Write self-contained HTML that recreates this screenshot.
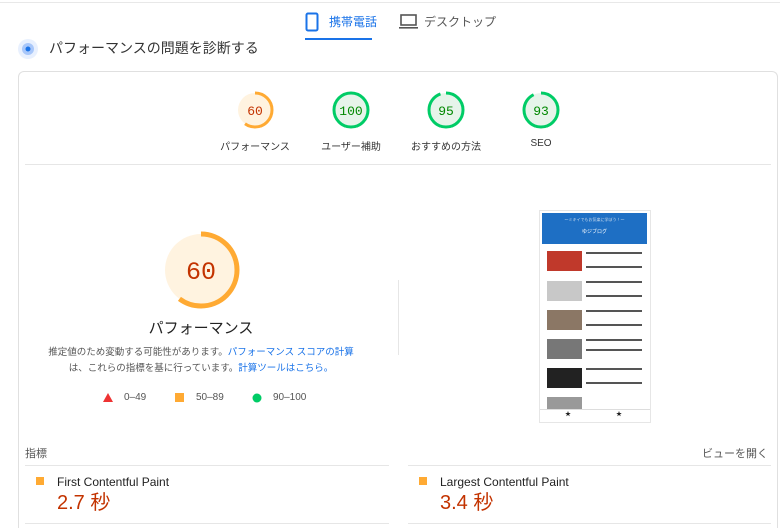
<!DOCTYPE html>
<html><head><meta charset="utf-8"><style>
html,body{margin:0;width:780px;height:528px;overflow:hidden}
body{background:#fff;font-family:"Liberation Sans","Noto Sans CJK JP",sans-serif;color:#212121}
#w{position:relative;width:780px;height:528px;overflow:hidden}
.a{position:absolute;white-space:nowrap}
.lbl{font-size:10px;color:#333;text-align:center;width:100px}
</style></head><body><div id="w">
<div class="a" style="left:0;top:2px;width:780px;height:1px;background:#e8e8e8"></div>
<svg class="a" style="left:305px;top:12px" width="14" height="20"><rect x="1.5" y="1.5" width="11" height="17" rx="1.5" fill="none" stroke="#1a73e8" stroke-width="2"/></svg>
<div class="a" style="left:329px;top:13px;font-size:12px;color:#1a73e8">携帯電話</div>
<div class="a" style="left:305px;top:38px;width:67px;height:2px;background:#1a73e8"></div>
<svg class="a" style="left:399px;top:14px" width="19" height="16"><rect x="2" y="1" width="15" height="10" fill="none" stroke="#555" stroke-width="1.6"/><rect x="0" y="13" width="19" height="1.6" fill="#555"/></svg>
<div class="a" style="left:424px;top:13px;font-size:12px;color:#555">デスクトップ</div>
<svg class="a" style="left:17px;top:38px" width="22" height="22"><circle cx="11" cy="11" r="10" fill="#e8f0fe"/><circle cx="11" cy="11" r="6" fill="#a8c7fa"/><circle cx="11" cy="11" r="2.5" fill="#1a73e8"/></svg>
<div class="a" style="left:49px;top:38px;font-size:14px;color:#333">パフォーマンスの問題を診断する</div>
<div class="a" style="left:18px;top:71px;width:760px;height:457px;border:1px solid #e0e0e0;border-bottom:none;border-radius:6px 6px 0 0;box-sizing:border-box"></div>
<div class="a" style="left:25px;top:164px;width:746px;height:1px;background:#e6e6e6"></div>

<svg class="a" style="left:0;top:0" width="780" height="528">
<g fill="none" stroke-width="3">
<circle cx="255" cy="110" r="17" fill="#fff3e0" stroke="none"/>
<circle cx="255" cy="110" r="17" stroke="#fa3" stroke-dasharray="64 107" transform="rotate(-90 255 110)"/>
<circle cx="351" cy="110" r="17" fill="#e6f4ea" stroke="#0c6"/>
<circle cx="446" cy="110" r="17" fill="#e6f4ea" stroke="#0c6" stroke-dasharray="101 107" transform="rotate(-90 446 110)"/>
<circle cx="541" cy="110" r="17" fill="#e6f4ea" stroke="#0c6" stroke-dasharray="99 107" transform="rotate(-90 541 110)"/>
<circle cx="201" cy="270" r="36" fill="#fff3e0" stroke="none"/>
<circle cx="201" cy="270" r="36" stroke="#fa3" stroke-width="5" stroke-dasharray="136 227" transform="rotate(-90 201 270)"/>
</g>
<g font-family="Liberation Mono,monospace" text-anchor="middle">
<text x="255" y="115" font-size="13" fill="#c33300">60</text>
<text x="351" y="115" font-size="13" fill="#008800">100</text>
<text x="446" y="115" font-size="13" fill="#008800">95</text>
<text x="541" y="115" font-size="13" fill="#008800">93</text>
<text x="201" y="279" font-size="25" fill="#c33300">60</text>
</g>
<polygon points="108,393 113,402 103,402" fill="#e33"/>
<rect x="175" y="393" width="9" height="9" fill="#fa3"/>
<circle cx="257" cy="398" r="4.5" fill="#0c6"/>
<rect x="36" y="477" width="8" height="8" fill="#fa3"/>
<rect x="419" y="477" width="8" height="8" fill="#fa3"/>
</svg>
<div class="a lbl" style="left:205px;top:138px">パフォーマンス</div>
<div class="a lbl" style="left:301px;top:138px">ユーザー補助</div>
<div class="a lbl" style="left:396px;top:138px">おすすめの方法</div>
<div class="a lbl" style="left:491px;top:138px">SEO</div>

<div class="a" style="left:101px;top:317px;width:200px;text-align:center;font-size:15px;color:#222">パフォーマンス</div>
<div class="a" style="left:26px;top:345px;width:350px;text-align:center;font-size:9.5px;color:#555;line-height:16px">推定値のため変動する可能性があります。<span style="color:#1a73e8">パフォーマンス スコアの計算</span><br>は、これらの指標を基に行っています。<span style="color:#1a73e8">計算ツールはこちら。</span></div>
<div class="a" style="left:124px;top:392px;font-size:10px;color:#555">0–49</div>
<div class="a" style="left:196px;top:392px;font-size:10px;color:#555">50–89</div>
<div class="a" style="left:273px;top:392px;font-size:10px;color:#555">90–100</div>
<div class="a" style="left:398px;top:280px;width:1px;height:75px;background:#e6e6e6"></div>

<div class="a" style="left:539px;top:210px;width:110px;height:211px;border:1px solid #e6e6e6;background:#fff">
 <div style="position:absolute;left:2px;top:2px;width:105px;height:31px;background:#1e6fc4"><div style="color:#cde;font-size:4px;text-align:center;margin-top:4px">〜ミキイでもお気楽に学ぼう！〜</div><div style="color:#fff;font-size:5px;text-align:center;margin-top:5px">ゆジブログ</div></div>
 <div style="position:absolute;left:7px;top:40px;width:35px;height:20px;background:#c0392b"></div>
 <div style="position:absolute;left:7px;top:70px;width:35px;height:20px;background:#c8c8c8"></div>
 <div style="position:absolute;left:7px;top:99px;width:35px;height:20px;background:#8b7765"></div>
 <div style="position:absolute;left:7px;top:128px;width:35px;height:20px;background:#777"></div>
 <div style="position:absolute;left:7px;top:157px;width:35px;height:20px;background:#222"></div>
 <div style="position:absolute;left:7px;top:186px;width:35px;height:12px;background:#999"></div>
 <div style="position:absolute;left:46px;top:41px;width:56px;height:12px;border-top:2px solid #555;border-bottom:2px solid #555"></div>
 <div style="position:absolute;left:46px;top:70px;width:56px;height:12px;border-top:2px solid #555;border-bottom:2px solid #555"></div>
 <div style="position:absolute;left:46px;top:99px;width:56px;height:12px;border-top:2px solid #555;border-bottom:2px solid #555"></div>
 <div style="position:absolute;left:46px;top:128px;width:56px;height:8px;border-top:2px solid #555;border-bottom:2px solid #555"></div>
 <div style="position:absolute;left:46px;top:157px;width:56px;height:12px;border-top:2px solid #555;border-bottom:2px solid #555"></div>
 <div style="position:absolute;left:0;top:198px;width:110px;height:1px;background:#ddd"></div>
 <div style="position:absolute;left:25px;top:198px;font-size:6px">★</div>
 <div style="position:absolute;left:76px;top:198px;font-size:6px">★</div>
</div>

<div class="a" style="left:25px;top:445px;font-size:11px;color:#555">指標</div>
<div class="a" style="left:702px;top:445px;font-size:11px;color:#555">ビューを開く</div>
<div class="a" style="left:25px;top:465px;width:364px;height:1px;background:#e6e6e6"></div>
<div class="a" style="left:408px;top:465px;width:363px;height:1px;background:#e6e6e6"></div>
<div class="a" style="left:57px;top:475px;font-size:12px;color:#222">First Contentful Paint</div>
<div class="a" style="left:440px;top:475px;font-size:12px;color:#222">Largest Contentful Paint</div>
<div class="a" style="left:57px;top:492px;font-size:20px;color:#c33300;line-height:23px">2.7 秒</div>
<div class="a" style="left:440px;top:492px;font-size:20px;color:#c33300;line-height:23px">3.4 秒</div>
<div class="a" style="left:25px;top:523px;width:364px;height:1px;background:#e6e6e6"></div>
<div class="a" style="left:408px;top:523px;width:363px;height:1px;background:#e6e6e6"></div>
</div></body></html>
